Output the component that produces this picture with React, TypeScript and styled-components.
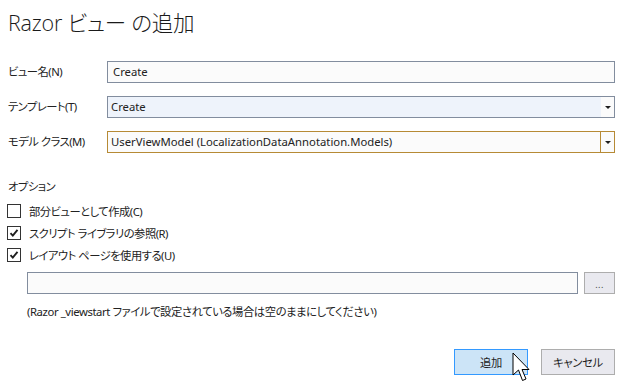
import React from "react"
import styled, { createGlobalStyle } from "styled-components"

const GlobalStyle = createGlobalStyle`
  html, body {
    margin: 0;
    padding: 0;
    background: #ffffff;
  }
  body {
    font-family: "Noto Sans", "Noto Sans CJK JP", sans-serif;
    font-feature-settings: "palt";
    font-size: 11.3px;
    color: #222222;
  }
`

const Dialog = styled.div`
  position: relative;
  width: 628px;
  height: 390px;
  box-sizing: border-box;
  padding: 8px 13px 0 8px;
  display: flex;
  flex-direction: column;
  overflow: hidden;
`

const Title = styled.h1`
  margin: 0;
  height: 38px;
  font-family: "Open Sans", "Noto Sans CJK JP", sans-serif;
  font-size: 21.5px;
  font-weight: 300;
  line-height: 30px;
  letter-spacing: -0.2px;
  color: #1a1a1a;
`

const Form = styled.div`
  display: grid;
  grid-template-columns: 99px 1fr;
  row-gap: 13px;
  margin-top: 15px;
  align-items: center;
`

const Label = styled.label`
  line-height: 22px;
  letter-spacing: -0.5px;
`

const Field = styled.div<{ $bg?: string; $border?: string }>`
  height: 22px;
  box-sizing: border-box;
  border: 1px solid ${(p) => p.$border || "#828d9e"};
  background: ${(p) => p.$bg || "#fbfbfb"};
  display: flex;
  align-items: center;
  line-height: 20px;
`

const FieldText = styled.span<{ $pad?: number }>`
  flex: 1;
  padding-left: ${(p) => p.$pad ?? 5}px;
  white-space: nowrap;
  overflow: hidden;
`

const DropButton = styled.div<{ $bg?: string; $sep?: string }>`
  width: 13px;
  align-self: stretch;
  display: flex;
  align-items: center;
  justify-content: center;
  background: ${(p) => p.$bg || "transparent"};
  border-left: ${(p) => (p.$sep ? `1px solid ${p.$sep}` : "none")};
`

const Arrow = styled.span`
  width: 0;
  height: 0;
  border-left: 3px solid transparent;
  border-right: 3px solid transparent;
  border-top: 3px solid #1e1e1e;
  margin-top: 1px;
`

const Section = styled.div`
  margin-top: 26px;
  line-height: 16px;
  letter-spacing: -0.5px;
`

const CheckList = styled.div`
  display: flex;
  flex-direction: column;
  gap: 8px;
  margin-top: 9px;
  margin-left: -1px;
`

const CheckRow = styled.div`
  display: flex;
  align-items: center;
  gap: 8px;
  height: 14px;
  letter-spacing: -0.5px;
`

const Box = styled.span`
  width: 14px;
  height: 14px;
  box-sizing: border-box;
  border: 1px solid #333333;
  background: #ffffff;
  display: flex;
  align-items: center;
  justify-content: center;
`

const PathRow = styled.div`
  display: flex;
  gap: 6px;
  margin-top: 10px;
  margin-left: 19px;
`

const PathInput = styled(Field)`
  flex: 1;
`

const BrowseButton = styled.div`
  width: 31px;
  height: 22px;
  box-sizing: border-box;
  border: 1px solid #adadad;
  background: #e9e9ef;
  display: flex;
  align-items: center;
  justify-content: center;
  font-size: 9px;
  letter-spacing: 0.5px;
  color: #444;
  padding-top: 2px;
`

const Hint = styled.div`
  margin-top: 10px;
  margin-left: 19px;
  line-height: 16px;
  letter-spacing: -0.4px;
`

const Footer = styled.div`
  display: flex;
  justify-content: flex-end;
  gap: 13px;
  margin-top: 29px;
`

const Button = styled.div<{ $primary?: boolean }>`
  width: 74px;
  height: 26px;
  box-sizing: border-box;
  border: 1px solid ${(p) => (p.$primary ? "#3399ff" : "#adadad")};
  background: ${(p) => (p.$primary ? "#cce4f7" : "#e9e9ef")};
  display: flex;
  align-items: center;
  justify-content: center;
  letter-spacing: -0.3px;
  color: #1e1e1e;
`

const Cursor = styled.svg`
  position: absolute;
  left: 512px;
  top: 352px;
`

const Check = () => (
  <svg width="10" height="10" viewBox="0 0 10 10">
    <path d="M1.5 5.2 L3.8 7.6 L8.5 1.8" fill="none" stroke="#1e1e1e" strokeWidth="1.9" />
  </svg>
)

const options = [
  { label: "部分ビューとして作成(C)", checked: false },
  { label: "スクリプト ライブラリの参照(R)", checked: true },
  { label: "レイアウト ページを使用する(U)", checked: true },
]

export default function App() {
  return (
    <Dialog>
      <GlobalStyle />
      <Title>Razor ビュー の追加</Title>
      <Form>
        <Label>ビュー名(N)</Label>
        <Field>
          <FieldText>Create</FieldText>
        </Field>
        <Label>テンプレート(T)</Label>
        <Field $bg="#eef3fb">
          <FieldText $pad={3}>Create</FieldText>
          <DropButton $bg="#fbfbfb">
            <Arrow />
          </DropButton>
        </Field>
        <Label>モデル クラス(M)</Label>
        <Field $border="#b68a35">
          <FieldText $pad={3}>UserViewModel (LocalizationDataAnnotation.Models)</FieldText>
          <DropButton $sep="#b68a35">
            <Arrow />
          </DropButton>
        </Field>
      </Form>
      <Section>オプション</Section>
      <CheckList>
        {options.map((o) => (
          <CheckRow key={o.label}>
            <Box>{o.checked && <Check />}</Box>
            <span>{o.label}</span>
          </CheckRow>
        ))}
      </CheckList>
      <PathRow>
        <PathInput />
        <BrowseButton>...</BrowseButton>
      </PathRow>
      <Hint>(Razor _viewstart ファイルで設定されている場合は空のままにしてください)</Hint>
      <Footer>
        <Button $primary>追加</Button>
        <Button>キャンセル</Button>
      </Footer>
      <Cursor width="19" height="31" viewBox="0 0 19 31">
        <path
          d="M1 1 L1 23 L6.5 18 L10.5 28.5 L14 27 L10 17.5 L17 17.5 Z"
          fill="#ffffff"
          stroke="#000000"
          strokeWidth="1"
        />
      </Cursor>
    </Dialog>
  )
}
